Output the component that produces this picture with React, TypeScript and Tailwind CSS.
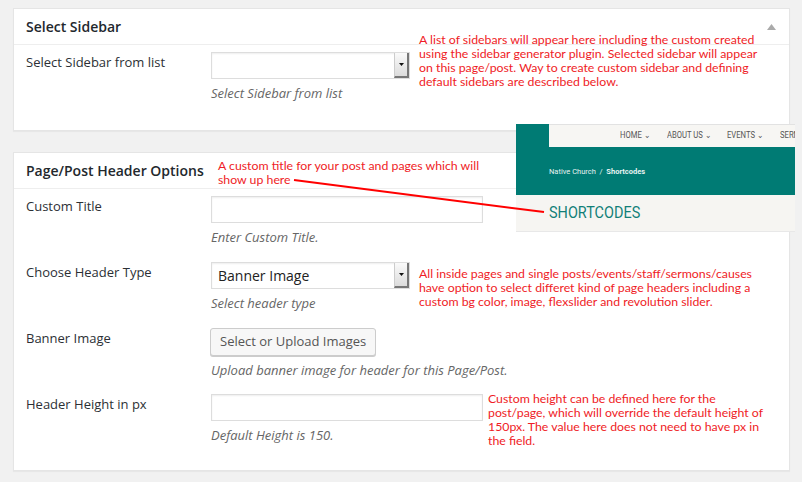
import React from "react";

const SelectBox: React.FC<{ value?: string }> = ({ value }) => (
  <div className="flex h-[27px] w-[199px] border border-[#ddd] bg-white shadow-[inset_0_1px_2px_rgba(0,0,0,0.07)]">
    <div className="flex-1 pl-[6px] text-[14px] leading-[25px] text-[#222]">{value}</div>
    <div className="flex w-[15px] items-center justify-center border-l border-[#ccc] border-r-2 border-b-2 border-r-[#777] border-b-[#777] bg-gradient-to-b from-[#fafafa] to-[#dcdcdc]">
      <svg width="5" height="3" viewBox="0 0 5 3">
        <polygon points="0,0 5,0 2.5,3" fill="#111" />
      </svg>
    </div>
  </div>
);

const TextBox: React.FC = () => (
  <div className="h-[27px] w-[272px] border border-[#ddd] bg-white shadow-[inset_0_1px_2px_rgba(0,0,0,0.07)]" />
);

const Row: React.FC<{ label: string; help: string; children: React.ReactNode }> = ({
  label,
  help,
  children,
}) => (
  <div className="flex h-[66px] pl-3">
    <div className="w-[185px] pt-[7px] text-[13px] leading-5 text-[#2c3035]">{label}</div>
    <div className="pt-[7px]">
      {children}
      <p className="mt-[5px] text-[13px] italic leading-[18px] text-[#666]">{help}</p>
    </div>
  </div>
);

const Panel: React.FC<{ title: string; className?: string; children: React.ReactNode }> = ({
  title,
  className,
  children,
}) => (
  <div className={`w-[777px] border border-[#e5e5e5] bg-white shadow-[0_1px_1px_rgba(0,0,0,0.04)] ${className ?? ""}`}>
    <div className="flex h-[36px] items-center justify-between border-b border-[#eee] pl-3 pr-[13px]">
      <h3 className="text-[14px] font-semibold text-[#23282d]">{title}</h3>
      <svg width="9" height="6" viewBox="0 0 9 6">
        <polygon points="0,6 9,6 4.5,0" fill="#aaa" />
      </svg>
    </div>
    {children}
  </div>
);

const Note: React.FC<{ className: string; lines: string[] }> = ({ className, lines }) => (
  <div className={`absolute whitespace-nowrap font-['Lato',sans-serif] text-[12.3px] leading-[14px] text-[#ef1c26] ${className}`}>
    {lines.map((l, i) => (
      <div key={i}>{l}</div>
    ))}
  </div>
);

export default function App() {
  return (
    <div className="relative h-[482px] w-[802px] overflow-hidden bg-[#f1f1f1] font-['Open_Sans',sans-serif]">
      <div className="pl-[13px] pt-2">
        <Panel title="Select Sidebar">
          <div className="pb-[19px]">
            <Row label="Select Sidebar from list" help="Select Sidebar from list">
              <SelectBox />
            </Row>
          </div>
        </Panel>

        <Panel title="Page/Post Header Options" className="mt-[21px]">
          <div className="pb-[17px]">
            <Row label="Custom Title" help="Enter Custom Title.">
              <TextBox />
            </Row>
            <Row label="Choose Header Type" help="Select header type">
              <SelectBox value="Banner Image" />
            </Row>
            <Row label="Banner Image" help="Upload banner image for header for this Page/Post.">
              <button className="-ml-px h-[28px] rounded-[3px] border border-[#ccc] bg-[#f7f7f7] px-[9px] text-[13px] text-[#555] shadow-[0_1px_0_#ccc]">
                Select or Upload Images
              </button>
            </Row>
            <Row label="Header Height in px" help="Default Height is 150.">
              <TextBox />
            </Row>
          </div>
        </Panel>
      </div>

      {/* inset screenshot of the front end */}
      <div className="absolute left-[516px] top-[124px] flex h-[108px] w-[279px] flex-col overflow-hidden font-['Roboto',sans-serif]">
        <div className="flex h-[23px]">
          <div className="w-[33px] shrink-0 bg-[#007b74]" />
          <div className="relative min-w-0 flex-1 overflow-hidden whitespace-nowrap border-t border-[#e2e2e2] bg-[#f7f6f3] text-[9px] text-[#555]">
            <span className="absolute left-[71px] top-[4px] origin-left scale-x-[0.85]">HOME ⌄</span>
            <span className="absolute left-[118px] top-[4px] origin-left scale-x-[0.85]">ABOUT US ⌄</span>
            <span className="absolute left-[178px] top-[4px] origin-left scale-x-[0.85]">EVENTS ⌄</span>
            <span className="absolute left-[231px] top-[4px] origin-left scale-x-[0.85]">SERM</span>
          </div>
        </div>
        <div className="flex h-[48px] items-center bg-[#007b74] pl-[33px] pt-[2px] text-[7.5px] text-[#e6f2f1]">
          Native Church&nbsp;&nbsp;/&nbsp;&nbsp;<span className="font-bold">Shortcodes</span>
        </div>
        <div className="flex flex-1 items-center border-b border-[#e8e8e8] bg-[#f6f5f2] pl-[33px] text-[17px] text-[#117f78]">
          <span className="inline-block origin-left scale-x-[0.85]">SHORTCODES</span>
        </div>
      </div>

      <svg className="absolute left-0 top-0" width="802" height="482">
        <line x1="294" y1="180" x2="544" y2="212" stroke="#f00" strokeWidth="2" />
      </svg>

      <Note
        className="left-[419px] top-[33px]"
        lines={[
          "A list of sidebars will appear here including the custom created",
          "using the sidebar generator plugin. Selected sidebar will appear",
          "on this page/post. Way to create custom sidebar and defining",
          "default sidebars are described below.",
        ]}
      />
      <Note
        className="left-[218px] top-[159px]"
        lines={["A custom title for your post and pages which will", "show up here"]}
      />
      <Note
        className="left-[419px] top-[267px]"
        lines={[
          "All inside pages and single posts/events/staff/sermons/causes",
          "have option to select differet kind of page headers including a",
          "custom bg color, image, flexslider and revolution slider.",
        ]}
      />
      <Note
        className="left-[488px] top-[392px]"
        lines={[
          "Custom height can be defined here for the",
          "post/page, which will override the default height of",
          "150px. The value here does not need to have px in",
          "the field.",
        ]}
      />
    </div>
  );
}
